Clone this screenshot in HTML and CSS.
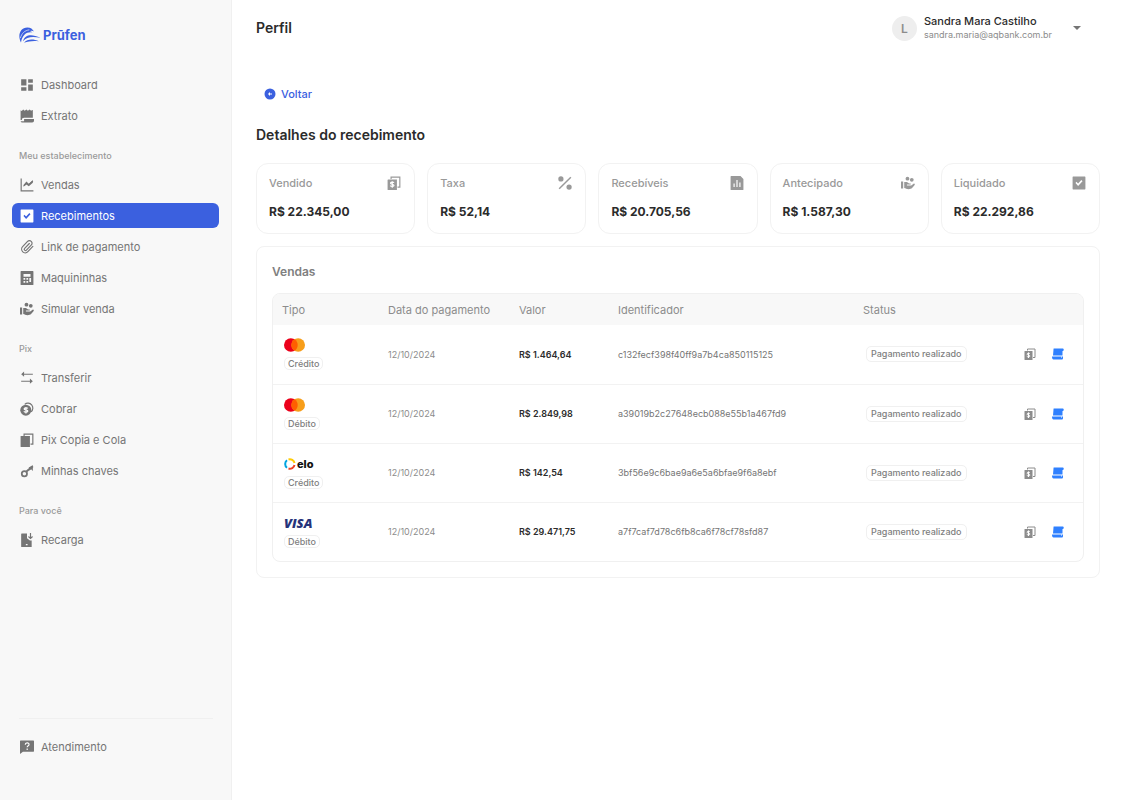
FILE: index.html
```html
<!DOCTYPE html>
<html lang="pt-BR">
<head>
    <meta charset="UTF-8">
    <meta name="viewport" content="width=device-width, initial-scale=1.0">
    <title>Detalhes do recebimento</title>
    <link rel="stylesheet" href="styles.css">
</head>
<body>
    <!-- Icon set -->
    <svg class="sprite" aria-hidden="true">
        <symbol id="i-dashboard" viewBox="0 0 24 24"><path d="M2 2h9v11H2zM2 16h9v6H2zM14 2h8v6h-8zM14 11h8v11h-8z"/></symbol>
        <symbol id="i-receipt" viewBox="0 0 24 24"><path d="M1 2l2 1.500L5.500 1l2.500 2 3-2 2.500 2 3-2 2.500 2 2-1.500 1 .5v13H7a4 4 0 0 0-4 4H1zM7 17h17v3a3 3 0 0 1-3 3H4a3 3 0 0 1-3-2h6z"/></symbol>
        <symbol id="i-chart" viewBox="0 0 24 24"><path d="M2 1v21h21M7 13l4-4 4 3 7-7" fill="none" stroke="currentColor" stroke-width="2"/><path d="M6 12l5-6 4 4 7-6v4l-7 6-4-3-5 4z"/></symbol>
        <symbol id="i-check" viewBox="0 0 24 24"><path fill-rule="evenodd" d="M2 1h20a1 1 0 0 1 1 1v20a1 1 0 0 1-1 1H2a1 1 0 0 1-1-1V2a1 1 0 0 1 1-1zM7.500 10L6 12l4.500 5L18 9l-2-2-5.500 6z"/></symbol>
        <symbol id="i-clip" viewBox="0 0 24 24"><path d="M16 6l-8 8.500a2 2 0 0 0 3 3l8.500-9a4.300 4.300 0 0 0-6.500-6l-8.500 9a6 6 0 0 0 9 8.500L22 11" fill="none" stroke="currentColor" stroke-width="2" stroke-linecap="round"/></symbol>
        <symbol id="i-calc" viewBox="0 0 24 24"><path fill-rule="evenodd" d="M2 0h20a1 1 0 0 1 1 1v22a1 1 0 0 1-1 1H2a1 1 0 0 1-1-1V1a1 1 0 0 1 1-1zM6 5v5h12V5zM6 12v3h3v-3zM11 12v3h3v-3zM16 12v7h3v-7zM6 17v3h3v-3zM11 17v3h3v-3z"/></symbol>
        <symbol id="i-hand" viewBox="0 0 26 24"><circle cx="12" cy="4" r="3.500"/><circle cx="20" cy="6" r="3.500"/><path d="M0 9h4v13H0zM6 10h5l4 3h3v2h-7v1.500h8L24 13c2 0 2 2 1 3l-4 5c-2 2-4 2.500-7 2.500-4 0-5-1.500-8-2z"/></symbol>
        <symbol id="i-transfer" viewBox="0 0 24 24"><path d="M22 5.500H4M2 17.500h18" fill="none" stroke="currentColor" stroke-width="2"/><path d="M2 5.500L7 1v9zM22 17.500L17 13v9z"/></symbol>
        <symbol id="i-coins" viewBox="0 0 24 24"><path d="M8 4a8 8 0 1 1 11 13" fill="none" stroke="currentColor" stroke-width="2"/><circle cx="10" cy="14" r="9.500"/><path class="cut" d="M13.500 11c-1-1.500-6.500-1.500-6.500.8 0 2.400 6.500 1.200 6.500 3.700 0 2.300-5.500 2.300-7 .5M10.200 8.500v11"/></symbol>
        <symbol id="i-copy" viewBox="0 0 24 24"><path d="M2 5h15v19H2a1 1 0 0 1-1-1V6a1 1 0 0 1 1-1z"/><path d="M7 5V2h15v17h-4" fill="none" stroke="currentColor" stroke-width="2"/></symbol>
        <symbol id="i-bill" viewBox="0 0 24 24"><path d="M2 6h15v18H2a1 1 0 0 1-1-1V7a1 1 0 0 1 1-1z"/><path d="M7 5V2h15v17h-4" fill="none" stroke="currentColor" stroke-width="2"/><path class="cut" d="M12 11.500c-1-1.500-6-1.500-6 .8 0 2.400 6 1.200 6 3.700 0 2.300-5 2.300-6.500.5M9 9v11"/></symbol>
        <symbol id="i-key" viewBox="0 0 24 24"><circle cx="7.500" cy="16.500" r="4.500" fill="none" stroke="currentColor" stroke-width="3"/><path d="M11 13L22 4" fill="none" stroke="currentColor" stroke-width="3.500"/><path d="M15 6l7-4v10l-3-3-3 2z"/></symbol>
        <symbol id="i-phone" viewBox="0 0 24 24"><path fill-rule="evenodd" d="M3 1h9v8l5 4h3v11H3a1 1 0 0 1-1-1V2a1 1 0 0 1 1-1zM10 19v2h3v-2z"/><path d="M18 0v9M14.500 6l3.500 3.500L21.500 6" fill="none" stroke="currentColor" stroke-width="2"/></symbol>
        <symbol id="i-help" viewBox="0 0 24 24"><path d="M1 1h22a1 1 0 0 1 1 1v17a1 1 0 0 1-1 1H5l-5 4V2a1 1 0 0 1 1-1z"/><path class="cut" d="M9 8c0-4 6.500-4 6.500-.5 0 2.500-3.200 2-3.200 5M12.300 14.500V17"/></symbol>
        <symbol id="i-percent" viewBox="0 0 24 24"><circle cx="5" cy="5" r="4.500"/><circle cx="19" cy="19" r="4.500"/><path d="M22 2L2 22" stroke="currentColor" stroke-width="2.500"/></symbol>
        <symbol id="i-report" viewBox="0 0 24 24"><path fill-rule="evenodd" d="M2 0h16l5 5v18a1 1 0 0 1-1 1H2a1 1 0 0 1-1-1V1a1 1 0 0 1 1-1zM6 13v6h2v-6zM11 7v12h2V7zM16 11v8h2v-8z"/></symbol>
        <symbol id="i-back" viewBox="0 0 24 24"><path fill-rule="evenodd" d="M12 1a11 11 0 1 1 0 22 11 11 0 0 1 0-22zM12 8l-4 4 4 4v-3h4v-2h-4z"/></symbol>
        <symbol id="i-scroll" viewBox="0 0 24 24"><path d="M4 1h18c2 0 2 5 0 5h-1v9H2L3 3c0-1 0-2 1-2zM0 17h19v3h1v-3h2v3c0 2-1 3-3 3H3c-2 0-3-2-3-6z"/></symbol>
        <symbol id="i-mastercard" viewBox="0 0 40 26"><circle cx="13" cy="13" r="13" fill="#eb001b"/><circle cx="27" cy="13" r="13" fill="#f79e1b"/><path fill="#ff5f00" d="M20 2a13 13 0 0 1 0 22 13 13 0 0 1 0-22z"/></symbol>
    </svg>

    <div class="layout">
        <aside class="sidebar">
            <a class="brand" href="#">
                <svg viewBox="0 0 66 48" aria-hidden="true">
                    <path d="M6 45C-5 25 3 0 25 0c10 0 16 5 20 12-5-3-8-2-12-1 4 1 6 2 8 4-17-3-31 6-35 30z"/>
                    <path d="M12 41c6-20 25-22 53-10-26-5-41-3-53 10z"/>
                    <path d="M15 46c10-12 27-12 45-5-19-2-31 0-45 5z"/>
                    <path class="wave" d="M4 32C8 17 17 9 31 7"/>
                </svg>
                <span>Prūfen</span>
            </a>
            <nav class="nav">
                <a class="nav-item" href="#"><svg class="icon"><use href="#i-dashboard"/></svg>Dashboard</a>
                <a class="nav-item" href="#"><svg class="icon"><use href="#i-receipt"/></svg>Extrato</a>

                <h3>Meu estabelecimento</h3>
                <a class="nav-item" href="#"><svg class="icon"><use href="#i-chart"/></svg>Vendas</a>
                <a class="nav-item active" href="#" aria-current="page"><svg class="icon"><use href="#i-check"/></svg>Recebimentos</a>
                <a class="nav-item" href="#"><svg class="icon"><use href="#i-clip"/></svg>Link de pagamento</a>
                <a class="nav-item" href="#"><svg class="icon"><use href="#i-calc"/></svg>Maquininhas</a>
                <a class="nav-item" href="#"><svg class="icon"><use href="#i-hand"/></svg>Simular venda</a>

                <h3>Pix</h3>
                <a class="nav-item" href="#"><svg class="icon"><use href="#i-transfer"/></svg>Transferir</a>
                <a class="nav-item" href="#"><svg class="icon"><use href="#i-coins"/></svg>Cobrar</a>
                <a class="nav-item" href="#"><svg class="icon"><use href="#i-copy"/></svg>Pix Copia e Cola</a>
                <a class="nav-item" href="#"><svg class="icon"><use href="#i-key"/></svg>Minhas chaves</a>

                <h3>Para você</h3>
                <a class="nav-item" href="#"><svg class="icon"><use href="#i-phone"/></svg>Recarga</a>
            </nav>
            <div class="sidebar-footer">
                <hr>
                <a class="nav-item" href="#"><svg class="icon"><use href="#i-help"/></svg>Atendimento</a>
            </div>
        </aside>

        <main class="main">
            <header class="topbar">
                <h1>Perfil</h1>
                <button class="user" type="button">
                    <span class="avatar">L</span>
                    <span class="user-info">
                        <span class="user-name">Sandra Mara Castilho</span>
                        <span class="user-email">sandra.maria@aqbank.com.br</span>
                    </span>
                    <svg class="caret" viewBox="0 0 8 4" aria-hidden="true"><path d="M0 0h8L4 4z"/></svg>
                </button>
            </header>

            <a class="back" href="#"><svg class="icon-sm"><use href="#i-back"/></svg>Voltar</a>
            <h2>Detalhes do recebimento</h2>

            <section class="cards">
                <div class="card">
                    <div class="card-top">Vendido<svg class="icon"><use href="#i-bill"/></svg></div>
                    <strong>R$ 22.345,00</strong>
                </div>
                <div class="card">
                    <div class="card-top">Taxa<svg class="icon"><use href="#i-percent"/></svg></div>
                    <strong>R$ 52,14</strong>
                </div>
                <div class="card">
                    <div class="card-top">Recebíveis<svg class="icon"><use href="#i-report"/></svg></div>
                    <strong>R$ 20.705,56</strong>
                </div>
                <div class="card">
                    <div class="card-top">Antecipado<svg class="icon"><use href="#i-hand"/></svg></div>
                    <strong>R$ 1.587,30</strong>
                </div>
                <div class="card">
                    <div class="card-top">Liquidado<svg class="icon"><use href="#i-check"/></svg></div>
                    <strong>R$ 22.292,86</strong>
                </div>
            </section>

            <section class="panel">
                <h3>Vendas</h3>
                <div class="table-box">
                    <table>
                        <colgroup>
                            <col class="col-type">
                            <col class="col-date">
                            <col class="col-value">
                            <col class="col-id">
                            <col class="col-status">
                            <col class="col-actions">
                        </colgroup>
                        <thead>
                            <tr>
                                <th>Tipo</th>
                                <th>Data do pagamento</th>
                                <th>Valor</th>
                                <th>Identificador</th>
                                <th>Status</th>
                                <th></th>
                            </tr>
                        </thead>
                        <tbody>
                            <tr>
                                <td><div class="type"><svg class="mastercard"><use href="#i-mastercard"/></svg><span class="tag">Crédito</span></div></td>
                                <td>12/10/2024</td>
                                <td class="value">R$ 1.464,64</td>
                                <td class="code">c132fecf398f40ff9a7b4ca850115125</td>
                                <td><span class="status">Pagamento realizado</span></td>
                                <td><div class="actions"><button type="button" aria-label="Copiar"><svg class="icon-sm"><use href="#i-bill"/></svg></button><button class="blue" type="button" aria-label="Comprovante"><svg class="icon-sm"><use href="#i-scroll"/></svg></button></div></td>
                            </tr>
                            <tr>
                                <td><div class="type"><svg class="mastercard"><use href="#i-mastercard"/></svg><span class="tag">Débito</span></div></td>
                                <td>12/10/2024</td>
                                <td class="value">R$ 2.849,98</td>
                                <td class="code">a39019b2c27648ecb088e55b1a467fd9</td>
                                <td><span class="status">Pagamento realizado</span></td>
                                <td><div class="actions"><button type="button" aria-label="Copiar"><svg class="icon-sm"><use href="#i-bill"/></svg></button><button class="blue" type="button" aria-label="Comprovante"><svg class="icon-sm"><use href="#i-scroll"/></svg></button></div></td>
                            </tr>
                            <tr>
                                <td>
                                    <div class="type">
                                        <span class="elo">
                                            <svg viewBox="0 0 24 24" aria-hidden="true">
                                                <path stroke="#00a4e0" d="M6 19.500a9.500 9.500 0 0 1 0-15"/>
                                                <path stroke="#ffcb05" d="M9 3a9.500 9.500 0 0 1 12 7"/>
                                                <path stroke="#ef4123" d="M21 14a9.500 9.500 0 0 1-12 7"/>
                                            </svg>elo
                                        </span>
                                        <span class="tag">Crédito</span>
                                    </div>
                                </td>
                                <td>12/10/2024</td>
                                <td class="value">R$ 142,54</td>
                                <td class="code">3bf56e9c6bae9a6e5a6bfae9f6a8ebf</td>
                                <td><span class="status">Pagamento realizado</span></td>
                                <td><div class="actions"><button type="button" aria-label="Copiar"><svg class="icon-sm"><use href="#i-bill"/></svg></button><button class="blue" type="button" aria-label="Comprovante"><svg class="icon-sm"><use href="#i-scroll"/></svg></button></div></td>
                            </tr>
                            <tr>
                                <td><div class="type"><span class="visa">VISA</span><span class="tag">Débito</span></div></td>
                                <td>12/10/2024</td>
                                <td class="value">R$ 29.471,75</td>
                                <td class="code">a7f7caf7d78c6fb8ca6f78cf78sfd87</td>
                                <td><span class="status">Pagamento realizado</span></td>
                                <td><div class="actions"><button type="button" aria-label="Copiar"><svg class="icon-sm"><use href="#i-bill"/></svg></button><button class="blue" type="button" aria-label="Comprovante"><svg class="icon-sm"><use href="#i-scroll"/></svg></button></div></td>
                            </tr>
                        </tbody>
                    </table>
                </div>
            </section>
        </main>
    </div>
</body>
</html>
```
FILE: styles.css
```css
* {
    margin: 0;
    padding: 0;
    box-sizing: border-box;
}

body {
    font-family: Inter, "Liberation Sans", sans-serif;
    font-size: 11px;
    color: #2b2b2b;
    background-color: #fff;
}

a {
    color: inherit;
    text-decoration: none;
}

button {
    font: inherit;
    color: inherit;
    background: none;
    border: none;
    cursor: pointer;
}

svg {
    display: block;
    fill: currentColor;
    flex-shrink: 0;
}

.sprite {
    position: absolute;
    width: 0;
    height: 0;
}

.cut {
    fill: none;
    stroke: #fff;
    stroke-width: 2;
}

.icon {
    width: 14px;
    height: 14px;
}

.icon-sm {
    width: 12px;
    height: 12px;
}

.layout {
    display: flex;
    min-height: 100vh;
}

/* Sidebar */
.sidebar {
    width: 232px;
    flex-shrink: 0;
    display: flex;
    flex-direction: column;
    padding: 25px 12px 41px;
    background-color: #f8f8f8;
    border-right: 1px solid #f0f0f0;
}

.brand {
    display: flex;
    align-items: center;
    gap: 2px;
    height: 20px;
    padding-left: 7px;
    color: #3b60df;
    font-size: 13px;
    font-weight: 700;
}

.brand svg {
    width: 22px;
    height: 17px;
}

.brand .wave {
    fill: none;
    stroke: #f8f8f8;
    stroke-width: 2;
}

.nav {
    display: flex;
    flex-direction: column;
    gap: 6px;
    margin-top: 27px;
}

.nav h3 {
    margin: 15px 0 3px;
    padding-left: 7px;
    font-size: 9px;
    line-height: 14px;
    font-weight: 500;
    color: #9a9a9a;
}

.nav-item {
    display: flex;
    align-items: center;
    gap: 7px;
    height: 25px;
    padding: 0 8px;
    border-radius: 6px;
    color: #757575;
}

.nav-item.active {
    background-color: #3b60df;
    color: #fff;
}

.nav-item.active .icon {
    color: #fff;
}

.sidebar-footer {
    margin-top: auto;
}

.sidebar-footer hr {
    margin: 0 6px 15px 7px;
    border: none;
    border-top: 1px solid #f0f0f0;
}

/* Content */
.main {
    flex: 1;
    min-width: 0;
    padding: 12px 25px 24px 24px;
}

.topbar {
    display: flex;
    justify-content: space-between;
    align-items: center;
    height: 32px;
}

h1,
h2 {
    font-size: 14px;
    line-height: 20px;
    font-weight: 600;
}

.user {
    display: flex;
    align-items: center;
    gap: 7px;
    padding-right: 19px;
    text-align: left;
}

.avatar {
    display: flex;
    align-items: center;
    justify-content: center;
    width: 25px;
    height: 25px;
    border-radius: 50%;
    background-color: #eee;
    color: #8c8c8c;
    font-size: 12px;
    font-weight: 600;
}

.user-info {
    display: flex;
    flex-direction: column;
    margin-right: 14px;
}

.user-name {
    line-height: 14px;
    font-weight: 500;
}

.user-email {
    font-size: 9px;
    line-height: 14px;
    color: #8c8c8c;
}

.caret {
    width: 8px;
    height: 4px;
    color: #757575;
}

.back {
    display: inline-flex;
    align-items: center;
    gap: 5px;
    height: 20px;
    margin: 40px 0 0 8px;
    color: #3b60df;
    font-weight: 500;
}

h2 {
    margin-top: 21px;
}

.cards {
    display: grid;
    grid-template-columns: repeat(5, 1fr);
    gap: 12px;
    margin-top: 18px;
}

.card {
    padding: 12px;
    border: 1px solid #f2f2f2;
    border-radius: 12px;
}

.card-top {
    display: flex;
    align-items: center;
    justify-content: space-between;
    height: 14px;
    margin-bottom: 13px;
    padding-right: 1px;
    font-weight: 500;
    color: #999;
}

.card strong {
    display: block;
    font-size: 12px;
    line-height: 18px;
    font-weight: 700;
}

.panel {
    margin-top: 12px;
    padding: 15px;
    border: 1px solid #f2f2f2;
    border-radius: 8px;
}

.panel h3 {
    margin-bottom: 11px;
    font-size: 12px;
    line-height: 20px;
    font-weight: 600;
    color: #808080;
}

/* Sales table */
.table-box {
    border: 1px solid #f0f0f0;
    border-radius: 8px;
    overflow: hidden;
}

table {
    width: 100%;
    table-layout: fixed;
    border-collapse: collapse;
}

.col-type { width: 106px; }
.col-date { width: 131px; }
.col-value { width: 99px; }
.col-id { width: 245px; }
.col-actions { width: 68px; }

th {
    height: 31px;
    padding-left: 9px;
    background-color: #f8f8f8;
    text-align: left;
    font-weight: 400;
    color: #8c8c8c;
}

td {
    height: 59px;
    padding-left: 9px;
    font-size: 9px;
    color: #8c8c8c;
}

tbody tr + tr td {
    border-top: 1px solid #f2f2f2;
}

td.value {
    font-weight: 600;
    color: #2b2b2b;
}

td.code {
    color: #757575;
}

.type {
    display: flex;
    flex-direction: column;
    align-items: flex-start;
    gap: 5px;
    padding-left: 2px;
}

.tag,
.status {
    display: inline-block;
    border: 1px solid #f0f0f0;
    border-radius: 5px;
    font-weight: 500;
    color: #808080;
}

.tag {
    padding: 0 3px;
    line-height: 11px;
}

.status {
    margin-left: 3px;
    padding: 0 4px;
    line-height: 14px;
}

.mastercard {
    width: 21px;
    height: 14px;
}

.elo,
.visa {
    display: flex;
    align-items: center;
    height: 14px;
    font-weight: 800;
}

.elo {
    gap: 1px;
    font-size: 11px;
    color: #111;
}

.elo svg {
    width: 12px;
    height: 12px;
    fill: none;
    stroke-width: 4;
}

.visa {
    font-family: "Open Sans", sans-serif;
    font-size: 13px;
    font-style: italic;
    color: #26337a;
}

.actions {
    display: flex;
    gap: 16px;
}

.actions .blue {
    color: #2f80ff;
}
```
